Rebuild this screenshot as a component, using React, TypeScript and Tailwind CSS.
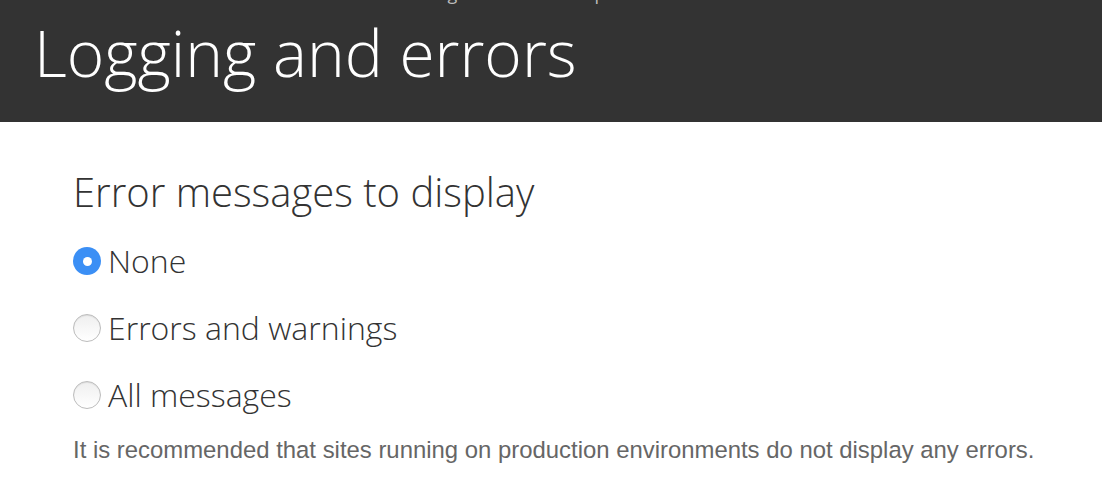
import { useState } from "react"

const options = [
    { id: "none", label: "None" },
    { id: "some", label: "Errors and warnings" },
    { id: "all", label: "All messages" },
]

const Radio = ({ checked }: { checked: boolean }) => (
    checked
        ? <span className="flex shrink-0 items-center justify-center w-[28px] h-[28px] rounded-full bg-[#3b8ff5]">
            <span className="w-[9px] h-[9px] rounded-full bg-white" />
        </span>
        : <span className="shrink-0 w-[28px] h-[28px] rounded-full border border-[#bcbcbc] bg-gradient-to-b from-[#efefef] to-white shadow-[inset_0_1px_1px_rgba(0,0,0,0.08)]" />
)

export default function App() {
    const [value, setValue] = useState("none")

    return (
        <div className="w-[1102px] h-[486px] bg-white overflow-hidden" style={{ fontFamily: '"Open Sans", sans-serif' }}>
            {/* header */}
            <header className="relative h-[122px] bg-[#333333] overflow-hidden">
                <div className="absolute -top-[20px] left-[192px] text-[18px] text-[#bbbbbb] whitespace-nowrap">
                    Home » Administration » Configuration » Development
                </div>
                <h1 className="pl-[34px] pt-[13px] text-[64px] font-light text-white leading-[80px]">
                    Logging and errors
                </h1>
            </header>

            <main className="pl-[73px] pt-[46px]">
                <h2 className="text-[40px] font-light text-[#333333] leading-[48px]">
                    Error messages to display
                </h2>
                <div className="mt-[24px] grid gap-[25px]">
                    {options.map(opt =>
                        <label
                            key={opt.id}
                            onClick={() => setValue(opt.id)}
                            className="flex items-center gap-[7px] h-[42px] cursor-pointer">
                            <Radio checked={value === opt.id} />
                            <span className="text-[32px] font-light text-[#333333] leading-[42px]">{opt.label}</span>
                        </label>
                    )}
                </div>
                <p className="mt-[20px] text-[23.9px] leading-[28px] text-[#666666]" style={{ fontFamily: '"Liberation Sans", Arial, sans-serif' }}>
                    It is recommended that sites running on production environments do not display any errors.
                </p>
            </main>
        </div>
    )
}
